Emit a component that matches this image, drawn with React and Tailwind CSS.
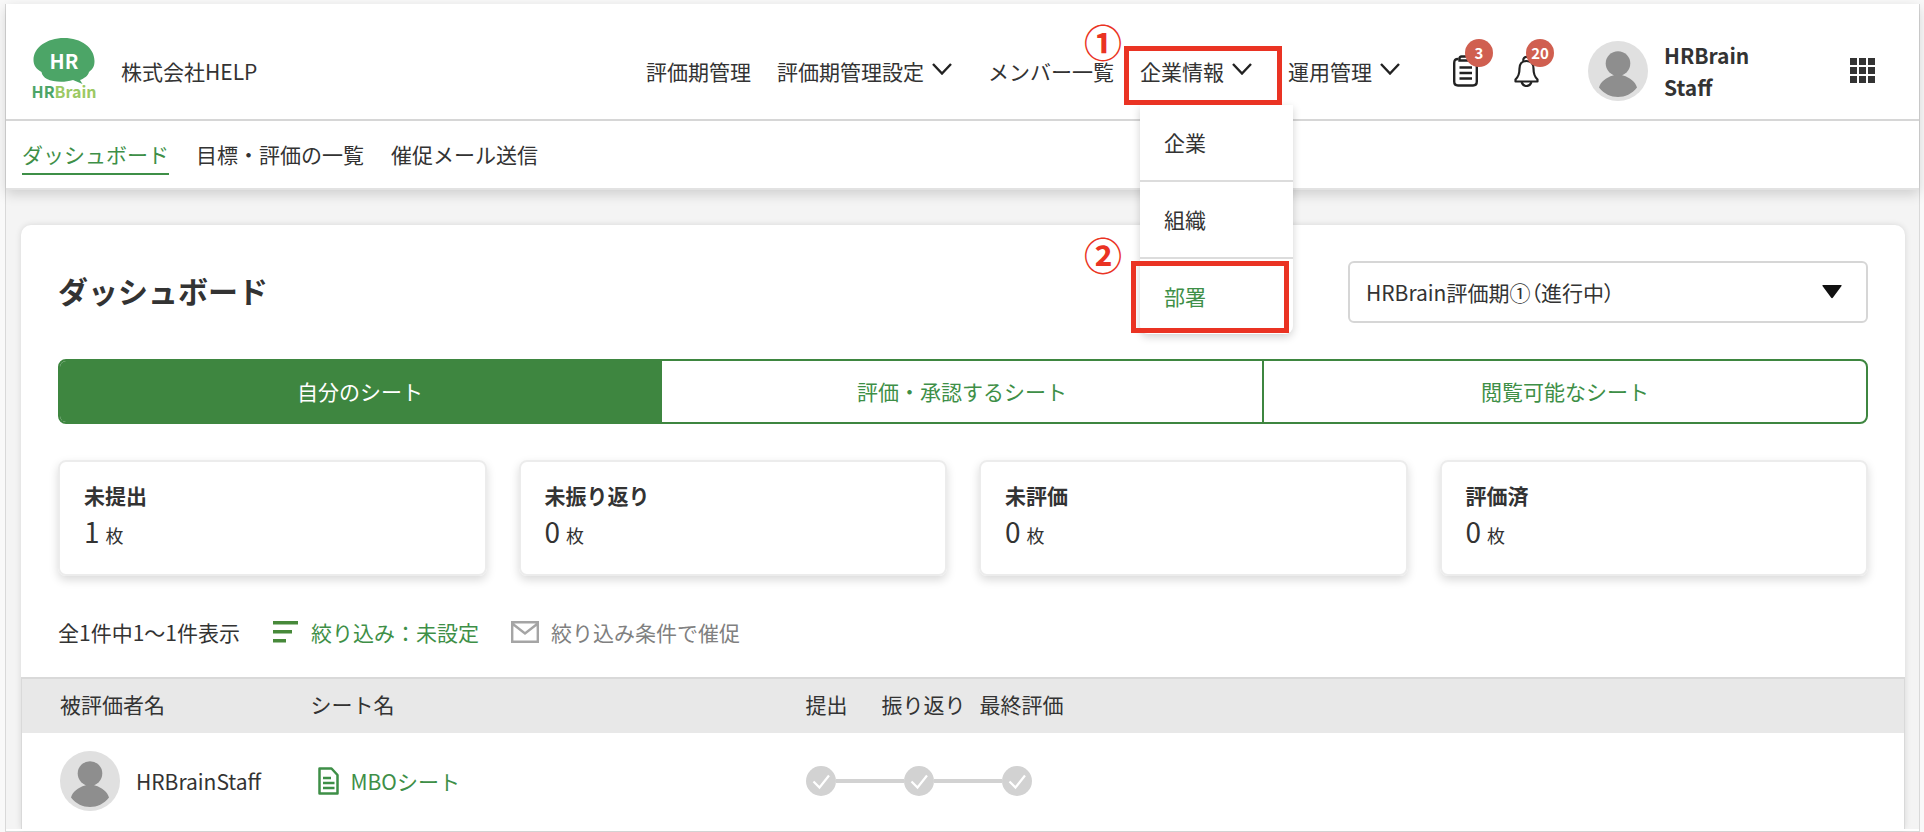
import React, { useState } from "react";

const navItems = [
  { label: "評価期管理" },
  { label: "評価期管理設定", menu: true },
  { label: "メンバー一覧" },
  { label: "企業情報", menu: true, open: true },
  { label: "運用管理", menu: true },
];

const subNavItems = ["ダッシュボード", "目標・評価の一覧", "催促メール送信"];

const companyMenu = ["企業", "組織", "部署"];

const tabs = ["自分のシート", "評価・承認するシート", "閲覧可能なシート"];

const stats = [
  { label: "未提出", count: 1 },
  { label: "未振り返り", count: 0 },
  { label: "未評価", count: 0 },
  { label: "評価済", count: 0 },
];

const Avatar = () => (
  <svg viewBox="0 0 60 60" className="size-[60px] shrink-0" aria-hidden="true">
    <circle cx="30" cy="30" r="30" fill="#e0e0e0" />
    <circle cx="30" cy="22.500" r="12.300" fill="#8e8e8e" />
    <path
      d="M25 34.500Q30 32 35 34.500C42 36.500 47.500 41 49 46.500C44 53 37 56 30 56S16 53 11 46.500C12.500 41 18 36.500 25 34.500Z"
      fill="#8e8e8e"
    />
  </svg>
);

const ChevronIcon = () => (
  <svg viewBox="0 0 20 12" className="mb-1 h-3 w-5" fill="none" aria-hidden="true">
    <path d="M1 1l9 9.500 9-9.500" stroke="#222" strokeWidth="2.400" />
  </svg>
);

const Logo = () => (
  <a href="#top" aria-label="HRBrain" className="flex w-[62px] flex-col items-center pb-1.5">
    <span className="relative grid h-[46px] w-[62px] place-items-center">
      <svg viewBox="0 0 62 46" className="absolute inset-0" aria-hidden="true">
        <path
          d="M31 0C48 0 61.500 9.500 61.500 23C61.500 28 60 31 56 34C55 38 51 40.500 47 42L49.500 46L40 42C31 45 20 44 14 41C11 39.500 9 37 8.500 34C3 31 .5 27 .5 22C.5 9.500 14 0 31 0Z"
          fill="#4ca567"
        />
      </svg>
      <span className="relative text-xl leading-none font-bold text-white">HR</span>
    </span>
    <span className="text-[16px] leading-[14px] font-bold text-[#4ca567]">
      HR<span className="text-[#9bc963]">Brain</span>
    </span>
  </a>
);

const Badge = ({ children }) => (
  <span className="absolute -top-4 left-3 grid size-7 place-items-center rounded-full bg-[#d05f50] text-[15px] leading-none font-bold text-white">
    {children}
  </span>
);

const Check = () => (
  <svg viewBox="0 0 30 30" className="size-[30px] shrink-0" fill="none" aria-hidden="true">
    <circle cx="15" cy="15" r="15" fill="#d2d2d2" />
    <path d="M7.500 15.500l6 6 9.500-12" stroke="#fff" strokeWidth="2.200" />
  </svg>
);

const CompanyMenu = () => (
  <ul className="absolute top-[49px] left-0 z-20 w-[153px] divide-y-2 divide-[#dcdcdc] rounded-b-lg bg-white shadow-[0_3px_8px_rgba(0,0,0,0.18)]">
    {companyMenu.map((item) => (
      <li key={item} className="relative">
        <a
          href="#menu"
          className={
            item === "部署"
              ? "flex h-[75px] items-center pl-6 text-[#3e8f47]"
              : "flex h-[75px] items-center pl-6"
          }
        >
          {item}
        </a>
        {item === "部署" && (
          <>
            <span className="absolute top-0.5 -left-[9px] h-[72px] w-[158px] border-[5px] border-[#ea3323]" />
            <span className="absolute -top-6 -left-14 text-[38px] leading-[38px] font-bold text-[#ea3323]">
              ②
            </span>
          </>
        )}
      </li>
    ))}
  </ul>
);

const Header = () => (
  <header className="relative z-10 border-b-2 border-[#e2e2e2] bg-white shadow-[0_4px_12px_rgba(0,0,0,0.16)]">
    <div className="flex h-[117px] items-center border-b-2 border-[#d6d6d6] pt-[18px] pr-11 pl-[27px]">
      <Logo />
      <span className="ml-[26px]">株式会社HELP</span>

      <nav className="mr-[43px] ml-auto flex items-center gap-[26px]">
        {navItems.map((item) => (
          <div key={item.label} className="relative">
            {item.menu ? (
              <button className="flex items-center gap-2 pr-2.5" aria-expanded={!!item.open}>
                {item.label}
                <ChevronIcon />
              </button>
            ) : (
              <a href="#nav">{item.label}</a>
            )}
            {item.open && (
              <>
                <CompanyMenu />
                <span className="pointer-events-none absolute -top-2.5 -left-4 z-30 h-[59px] w-[158px] border-[5px] border-[#ea3323]" />
                <span className="absolute -top-8 -left-14 z-30 text-[38px] leading-[34px] font-bold text-[#ea3323]">
                  ①
                </span>
              </>
            )}
          </div>
        ))}
      </nav>

      <div className="flex items-center">
        <button className="relative" aria-label="タスク">
          <svg viewBox="0 0 25 32" className="h-8 w-[25px]" fill="none" stroke="#222" strokeWidth="2.400" aria-hidden="true">
            <path d="M5.500 4H5Q1.200 4 1.200 8V26.500Q1.200 30.500 5 30.500H20Q23.800 30.500 23.800 26.500V8Q23.800 4 20 4H19.500" />
            <path d="M6.500 5.500V3.500Q6.500 1.500 8.500 1.500H17Q19 1.500 19 3.500V5.500Z" />
            <path d="M6.500 12.500h12.500M6.500 18h12.500M6.500 23.500h12.500" />
          </svg>
          <Badge>3</Badge>
        </button>
        <button className="relative ml-9" aria-label="お知らせ">
          <svg viewBox="0 0 25 32" className="h-8 w-[25px]" fill="none" stroke="#222" strokeWidth="2.200" strokeLinejoin="round" aria-hidden="true">
            <path d="M9.500 6C8 .5 17 .5 15.500 6" />
            <path d="M12.500 6C7.500 6 5.500 9.500 5.500 13.500C5.500 20 4 22 1.500 24.500V26.500H23.500V24.500C21 22 19.500 20 19.500 13.500C19.500 9.500 17.500 6 12.500 6Z" />
            <path d="M7.500 27C8.500 29.500 10 31 12.500 31S16.500 29.500 17.500 27" />
          </svg>
          <Badge>20</Badge>
        </button>
        <div className="ml-[49px] flex items-center gap-4">
          <Avatar />
          <span className="w-[100px] leading-8 font-bold">HRBrain Staff</span>
        </div>
        <button className="ml-[86px]" aria-label="アプリ一覧">
          <svg viewBox="0 0 25 25" className="size-[25px]" fill="#333" aria-hidden="true">
            {[0, 9, 18].map((y) =>
              [0, 9, 18].map((x) => <rect key={`${x}-${y}`} x={x} y={y} width="7" height="7" />)
            )}
          </svg>
        </button>
      </div>
    </div>

    <nav className="flex h-[67px] items-center gap-[27px] px-4 pt-1">
      {subNavItems.map((item, i) => (
        <a
          key={item}
          href="#subnav"
          className={
            i === 0
              ? "border-b-2 border-[#3e8f47] pb-1 text-[#3e8f47]"
              : "border-b-2 border-transparent pb-1"
          }
        >
          {item}
        </a>
      ))}
    </nav>
  </header>
);

const SheetTable = () => (
  <table className="w-full table-fixed border-x border-t-2 border-[#d9d9d9] text-left">
    <colgroup>
      <col className="w-[289px]" />
      <col className="w-[495px]" />
      <col />
    </colgroup>
    <thead>
      <tr className="h-[55px] bg-[#e8e8e8]">
        <th className="pb-1 pl-[38px] font-normal">被評価者名</th>
        <th className="pb-1 font-normal">シート名</th>
        <th className="pb-1 font-normal">
          <div className="flex">
            <span className="w-[76px]">提出</span>
            <span className="w-[98px]">振り返り</span>
            <span>最終評価</span>
          </div>
        </th>
      </tr>
    </thead>
    <tbody>
      <tr className="h-24 bg-white">
        <td className="pl-[38px]">
          <div className="flex items-center gap-4">
            <Avatar />
            HRBrainStaff
          </div>
        </td>
        <td>
          <a href="#sheet" className="flex items-center gap-3 pl-[7px] text-[#3e8f47]">
            <svg viewBox="0 0 21 28" className="h-7 w-[21px]" fill="none" stroke="#3e8f47" strokeWidth="2.500" strokeLinejoin="round" aria-hidden="true">
              <path d="M1.500 1.500H13.500L19.500 8V26.500H1.500ZM5 11h8M5 16h11.500M5 21h11.500" />
            </svg>
            MBOシート
          </a>
        </td>
        <td>
          <div className="flex items-center">
            <Check />
            <span className="h-1 w-[68px] bg-[#d2d2d2]" />
            <Check />
            <span className="h-1 w-[68px] bg-[#d2d2d2]" />
            <Check />
          </div>
        </td>
      </tr>
    </tbody>
  </table>
);

const App = () => {
  const [activeTab, setActiveTab] = useState(0);

  return (
    <div
      lang="ja"
      className="min-h-screen bg-[#f9f9f9] pt-1 pr-1 pl-[5px] font-['Noto_Sans_CJK_JP',sans-serif] text-[21px] leading-[30px] text-[#333]"
    >
      <div className="border-x border-b-2 border-[#d9d9d9] bg-[#f4f4f4]">
        <Header />

        <main className="pt-[35px] pr-3.5 pl-[15px]">
          <section className="rounded-t-[10px] bg-white shadow-[0_0_6px_rgba(0,0,0,0.12)]">
            <div className="px-[37px] pt-9">
              <div className="flex items-center justify-between">
                <h1 className="pb-1 text-[30px] font-bold">ダッシュボード</h1>
                <div className="relative w-[520px]">
                  <select
                    aria-label="評価期"
                    className="h-[62px] w-full appearance-none rounded-md border-2 border-[#d6d6d6] bg-white px-4 [font-feature-settings:'palt']"
                  >
                    <option>HRBrain評価期①（進行中）</option>
                  </select>
                  <svg viewBox="0 0 20 14" className="pointer-events-none absolute top-6 right-[26px] h-3.5 w-5" aria-hidden="true">
                    <path d="M1 0H19Q20 0 19.500 1L11 12.500Q10 14 9 12.500L.5 1Q0 0 1 0Z" fill="#111" />
                  </svg>
                </div>
              </div>

              <div className="mt-9 grid h-[65px] grid-cols-3 divide-x-2 divide-[#3e8640] overflow-hidden rounded-lg border-2 border-[#3e8640]">
                {tabs.map((tab, i) => (
                  <button
                    key={tab}
                    onClick={() => setActiveTab(i)}
                    className={
                      i === activeTab ? "bg-[#3e8640] pb-0.5 text-white" : "pb-0.5 text-[#3e8f47]"
                    }
                  >
                    {tab}
                  </button>
                ))}
              </div>

              <div className="mt-9 grid grid-cols-4 gap-8">
                {stats.map((stat) => (
                  <div
                    key={stat.label}
                    className="h-[116px] rounded-lg border-2 border-[#ececec] px-6 pt-[18px] shadow-[0_4px_10px_rgba(0,0,0,0.15)]"
                  >
                    <p className="font-bold">{stat.label}</p>
                    <p className="mt-1.5">
                      <span className="text-[28px]">{stat.count}</span>
                      <span className="ml-1.5 text-lg">枚</span>
                    </p>
                  </div>
                ))}
              </div>

              <div className="flex h-[101px] items-center pt-2.5">
                <span>全1件中1〜1件表示</span>
                <button className="ml-[33px] flex items-center gap-3 text-[#3e8f47]">
                  <svg viewBox="0 0 26 22" className="h-[22px] w-[26px]" fill="#47893a" aria-hidden="true">
                    <path d="M0 0H25V3.500H0ZM0 9H19V12.500H0ZM0 18H13V21.500H0Z" />
                  </svg>
                  絞り込み：未設定
                </button>
                <button className="ml-8 flex items-center gap-3 text-[#808080]">
                  <svg viewBox="0 0 28 22" className="h-[22px] w-7" fill="none" stroke="#a5a5a5" strokeWidth="2.400" aria-hidden="true">
                    <path d="M1.200 1.200H26.800V20.800H1.200ZM1.200 2.500L14 12.500L26.800 2.500" />
                  </svg>
                  絞り込み条件で催促
                </button>
              </div>
            </div>

            <SheetTable />
          </section>
        </main>
        <div className="h-0.5 bg-white" />
      </div>
    </div>
  );
};

export default App;
